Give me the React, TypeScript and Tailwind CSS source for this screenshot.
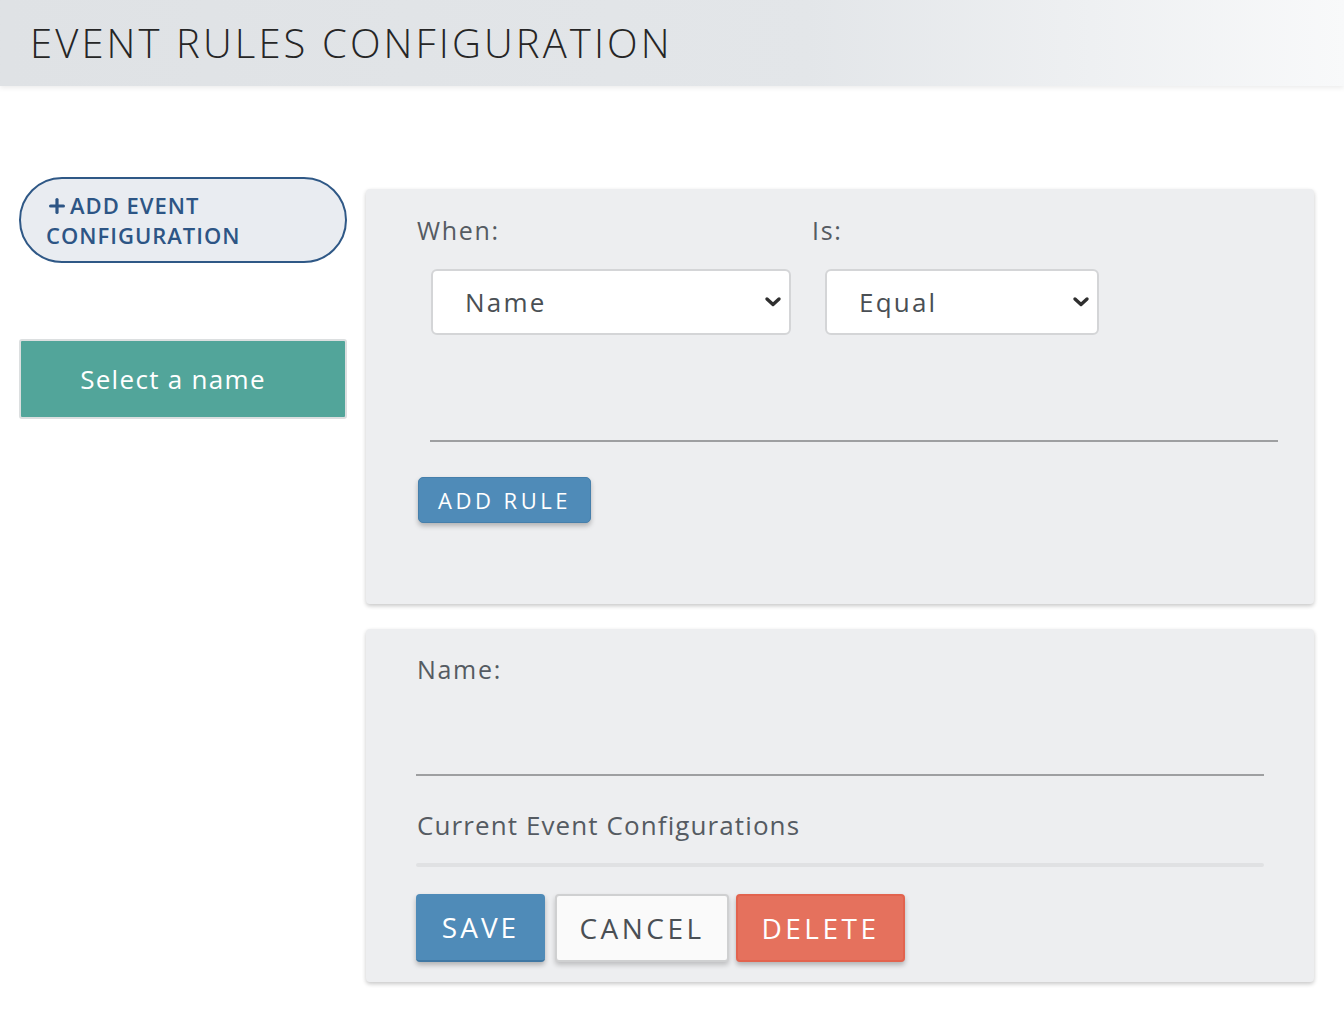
import { Plus } from 'lucide-react';

function Chevron() {
  return (
    <svg width="18" height="12" viewBox="0 0 18 12" className="shrink-0">
      <path d="M3 3 L9 8.5 L15 3" fill="none" stroke="#2f2f2f" strokeWidth="3.4" strokeLinecap="round" strokeLinejoin="round" />
    </svg>
  );
}

function FakeSelect({ value, width }: { value: string; width: string }) {
  return (
    <div
      className={`${width} h-[66px] bg-white border-2 border-[#d4d5d7] rounded-[6px] flex items-center justify-between pl-[32px] pr-[7px]`}
    >
      <span className="text-[26px] text-[#4a4f54] tracking-[2.2px]">{value}</span>
      <Chevron />
    </div>
  );
}

export default function App() {
  return (
    <div className="min-h-screen bg-white font-['Open_Sans',sans-serif]">
      <header className="h-[86px] flex items-center px-[30px] bg-gradient-to-r from-[#dfe2e5] via-[#e3e6e9] via-60% to-[#f8f9fa] shadow-[0_2px_5px_rgba(0,0,0,0.08)]">
        <h1 className="text-[40px] font-light text-[#262626] tracking-[3.1px]">EVENT RULES CONFIGURATION</h1>
      </header>

      <div className="flex gap-[19px] pl-[19px] pt-[91px]">
        {/* left column */}
        <div className="w-[328px] flex flex-col">
          <button className="h-[86px] rounded-full border-2 border-[#2f5886] bg-[#e9ecf1] text-left pl-[25px] pr-4 text-[22px] leading-[30px] font-semibold text-[#2d5585] tracking-[1px]">
            <Plus className="inline h-[22px] w-[22px] -mt-[4px] mr-[2px]" strokeWidth={3.5} />
            ADD EVENT
            <br />
            CONFIGURATION
          </button>
          <div className="mt-[76px] h-[80px] bg-[#52a59a] border-2 border-[#dcdfe0] rounded-[3px] flex items-center justify-center pr-[20px] text-[26px] text-white tracking-[1.3px]">
            Select a name
          </div>
        </div>

        {/* right column */}
        <div className="w-[948px] mt-[12px] flex flex-col gap-[25px]">
          <section className="h-[415px] bg-[#edeef0] rounded-[4px] shadow-[0_2px_4px_rgba(0,0,0,0.22)] pt-[26px] pl-[51px]">
            <div className="flex text-[25px] leading-[30px] font-medium text-[#555b62] tracking-[1.7px]">
              <span className="w-[395px]">When:</span>
              <span>Is:</span>
            </div>
            <div className="flex gap-[34px] mt-[24px] ml-[14px]">
              <FakeSelect value="Name" width="w-[360px]" />
              <FakeSelect value="Equal" width="w-[274px]" />
            </div>
            <div className="mt-[105px] ml-[13px] w-[848px] h-[2px] bg-[#9e9fa1]" />
            <button className="mt-[35px] ml-[1px] w-[173px] h-[46px] rounded-[5px] bg-[#4f8bb8] border border-[#467fab] text-white text-[22px] tracking-[3.5px] shadow-[0_3px_5px_rgba(0,0,0,0.25)]">
              ADD RULE
            </button>
          </section>

          <section className="h-[353px] bg-[#edeef0] rounded-[4px] shadow-[0_2px_4px_rgba(0,0,0,0.22)] pt-[25px] px-[50px]">
            <div className="text-[25px] leading-[30px] font-medium text-[#555b62] pl-[1px] tracking-[1.7px]">Name:</div>
            <div className="mt-[90px] w-[848px] h-[2px] bg-[#9e9fa1]" />
            <div className="mt-[33px] text-[26px] leading-[32px] font-medium text-[#555b62] pl-[1px] tracking-[1.1px]">
              Current Event Configurations
            </div>
            <div className="mt-[22px] w-[848px] h-[4px] bg-[#e0e1e3] rounded-full" />
            <div className="flex mt-[27px]">
              <button className="w-[129px] h-[68px] rounded-[4px] bg-[#4f8bb8] border-b-2 border-[#3f77a3] text-white text-[28px] tracking-[3px] shadow-[0_3px_5px_rgba(0,0,0,0.25)]">
                SAVE
              </button>
              <button className="ml-[10px] w-[174px] h-[68px] rounded-[4px] bg-[#fafafa] border-2 border-[#cfd0d1] text-[#4a4f54] text-[28px] tracking-[3.5px] shadow-[0_3px_5px_rgba(0,0,0,0.2)]">
                CANCEL
              </button>
              <button className="ml-[7px] w-[169px] h-[68px] rounded-[4px] bg-[#e5715d] border-2 border-[#e2634e] text-white text-[28px] tracking-[3.5px] shadow-[0_3px_5px_rgba(0,0,0,0.25)]">
                DELETE
              </button>
            </div>
          </section>
        </div>
      </div>
    </div>
  );
}
